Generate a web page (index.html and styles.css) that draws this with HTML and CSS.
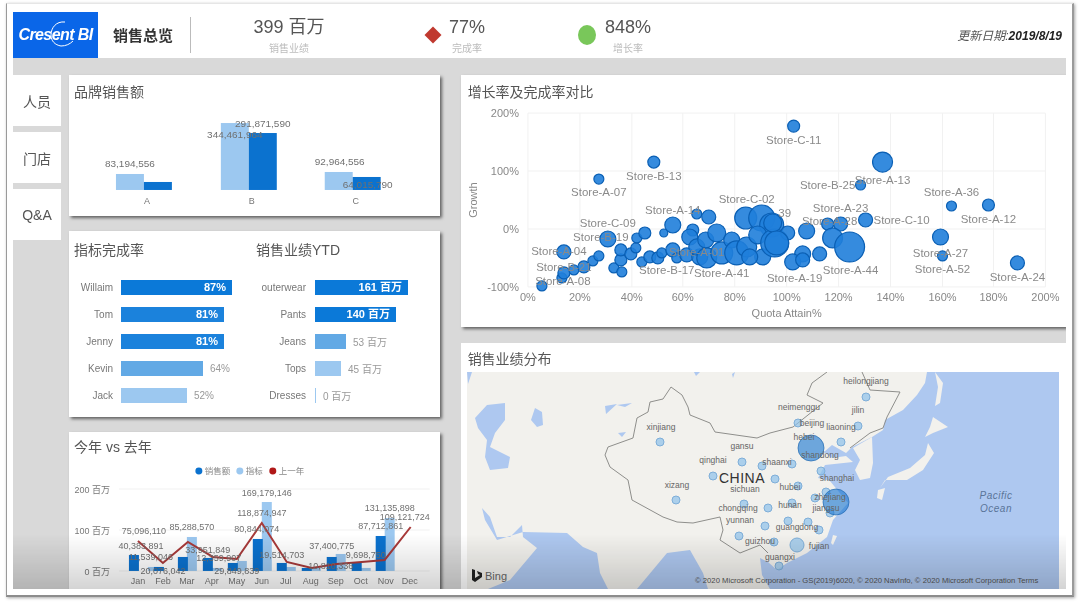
FILE: index.html
```html
<!DOCTYPE html>
<html lang="zh">
<head>
    <meta charset="UTF-8">
    <title>销售总览</title>
    <link rel="stylesheet" href="styles.css">
</head>
<body>
    <div class="frame">
        <header class="top">
            <div class="logo">
                <span class="logo-text">Cresent BI</span>
                <svg class="logo-arc" viewBox="0 0 30 30"><path d="M19 3C10 2 5 9 5 16c0 6 4 10 10 11 5 0 9-2 12-5" fill="none" stroke="#fff" stroke-width="1"/></svg>
            </div>
            <div class="page-title">销售总览</div>
            <div class="kpi kpi-sales">
                <div class="kpi-value">399 百万</div>
                <div class="kpi-label">销售业绩</div>
            </div>
            <div class="diamond"></div>
            <div class="kpi kpi-rate">
                <div class="kpi-value">77%</div>
                <div class="kpi-label">完成率</div>
            </div>
            <div class="dot"></div>
            <div class="kpi kpi-growth">
                <div class="kpi-value">848%</div>
                <div class="kpi-label">增长率</div>
            </div>
            <div class="update">更新日期:<b>2019/8/19</b></div>
        </header>

        <main class="main">
            <nav class="tabs">
                <div class="tab">人员</div>
                <div class="tab">门店</div>
                <div class="tab">Q&amp;A</div>
            </nav>

            <section class="col-left">
                <div class="card card-brand">
                    <h3>品牌销售额</h3>
                    <svg class="chart" viewBox="69 100 371 116">
                        <rect class="light" x="116" y="174" width="28" height="16"/>
                        <rect class="dark" x="144" y="182" width="28" height="8"/>
                        <rect class="light" x="221" y="123" width="28" height="67"/>
                        <rect class="dark" x="249" y="133" width="28" height="57"/>
                        <rect class="light" x="325" y="172" width="28" height="18"/>
                        <rect class="dark" x="353" y="177" width="28" height="13"/>
                        <text class="val" x="130" y="167" text-anchor="middle">83,194,556</text>
                        <text class="val" x="263" y="127" text-anchor="middle">291,871,590</text>
                        <text class="val" x="235" y="138" text-anchor="middle">344,461,964</text>
                        <text class="val" x="340" y="165" text-anchor="middle">92,964,556</text>
                        <text class="val" x="368" y="188" text-anchor="middle">64,015,790</text>
                        <text class="tick" x="147" y="204" text-anchor="middle">A</text>
                        <text class="tick" x="252" y="204" text-anchor="middle">B</text>
                        <text class="tick" x="356" y="204" text-anchor="middle">C</text>
                    </svg>
                </div>

                <div class="card card-bars">
                    <div class="bars bars-rate">
                        <h3>指标完成率</h3>
                        <div class="row"><span class="name">Willaim</span><div class="bar c1" style="width:111px">87%</div></div>
                        <div class="row"><span class="name">Tom</span><div class="bar c2" style="width:103px">81%</div></div>
                        <div class="row"><span class="name">Jenny</span><div class="bar c2" style="width:103px">81%</div></div>
                        <div class="row"><span class="name">Kevin</span><div class="bar c3" style="width:82px"></div><span class="out">64%</span></div>
                        <div class="row"><span class="name">Jack</span><div class="bar c4" style="width:66px"></div><span class="out">52%</span></div>
                    </div>
                    <div class="bars bars-ytd">
                        <h3>销售业绩YTD</h3>
                        <div class="row"><span class="name">outerwear</span><div class="bar c1" style="width:93px">161 百万</div></div>
                        <div class="row"><span class="name">Pants</span><div class="bar c1" style="width:81px">140 百万</div></div>
                        <div class="row"><span class="name">Jeans</span><div class="bar c3" style="width:31px"></div><span class="out">53 百万</span></div>
                        <div class="row"><span class="name">Tops</span><div class="bar c4" style="width:26px"></div><span class="out">45 百万</span></div>
                        <div class="row"><span class="name">Dresses</span><div class="bar c4" style="width:1px"></div><span class="out">0 百万</span></div>
                    </div>
                </div>

                <div class="card card-year">
                    <h3>今年 vs 去年</h3>
                    <svg class="chart" viewBox="69 457 371 132">
                        <circle class="dark" cx="199" cy="471" r="3.5"/><text class="legend" x="205" y="474">销售额</text>
                        <circle class="light" cx="240" cy="471" r="3.5"/><text class="legend" x="246" y="474">指标</text>
                        <circle fill="#b01818" cx="273" cy="471" r="3.5"/><text class="legend" x="279" y="474">上一年</text>

                        <line class="grid" x1="119" y1="489" x2="430" y2="489"/>
                        <line class="grid" x1="119" y1="530" x2="430" y2="530"/>
                        <line class="grid" x1="119" y1="571" x2="430" y2="571"/>
                        <text class="tick" x="110" y="493" text-anchor="end">200 百万</text>
                        <text class="tick" x="110" y="534" text-anchor="end">100 百万</text>
                        <text class="tick" x="110" y="575" text-anchor="end">0 百万</text>

                        <g class="light">
                            <rect x="148" y="567" width="10" height="4"/><rect x="187" y="537" width="10" height="34"/>
                            <rect x="212" y="568" width="10" height="3"/><rect x="237" y="561" width="10" height="10"/>
                            <rect x="262" y="502" width="10" height="69"/><rect x="286" y="567" width="10" height="4"/>
                            <rect x="311" y="567" width="10" height="4"/><rect x="336" y="554" width="10" height="17"/>
                            <rect x="361" y="568" width="10" height="3"/><rect x="385" y="518" width="10" height="53"/>
                        </g>
                        <g class="dark">
                            <rect x="129" y="555" width="10" height="16"/><rect x="154" y="567" width="10" height="4"/>
                            <rect x="178" y="557" width="10" height="14"/><rect x="203" y="558" width="10" height="13"/>
                            <rect x="228" y="563" width="10" height="8"/><rect x="253" y="539" width="10" height="32"/>
                            <rect x="277" y="563" width="10" height="8"/><rect x="302" y="568" width="10" height="3"/>
                            <rect x="327" y="557" width="10" height="14"/><rect x="352" y="563" width="10" height="8"/>
                            <rect x="376" y="536" width="10" height="35"/>
                        </g>
                        <polyline class="trend" points="138,541 163,563 188,542 213,557 237,559 262,523 287,562 312,568 337,564 362,562 385,560 411,527"/>

                        <g class="val val-small" text-anchor="middle">
                            <text x="144" y="534">75,096,110</text>
                            <text x="141" y="549">40,383,891</text>
                            <text x="151" y="560">11,539,046</text>
                            <text x="163" y="574">20,076,042</text>
                            <text x="192" y="530">85,288,570</text>
                            <text x="208" y="553">33,951,849</text>
                            <text x="219" y="561">12,359,907</text>
                            <text x="237" y="574">29,849,839</text>
                            <text x="267" y="496">169,179,146</text>
                            <text x="262" y="516">118,874,947</text>
                            <text x="257" y="532">80,844,074</text>
                            <text x="282" y="558">19,514,703</text>
                            <text x="332" y="549">37,400,775</text>
                            <text x="331" y="569">10,810,336</text>
                            <text x="366" y="558">9,698,750</text>
                            <text x="390" y="511">131,135,898</text>
                            <text x="405" y="520">109,121,724</text>
                            <text x="381" y="529">87,712,861</text>
                        </g>

                        <g class="tick" text-anchor="middle">
                            <text x="138" y="584">Jan</text><text x="163" y="584">Feb</text><text x="187" y="584">Mar</text>
                            <text x="212" y="584">Apr</text><text x="237" y="584">May</text><text x="262" y="584">Jun</text>
                            <text x="286" y="584">Jul</text><text x="311" y="584">Aug</text><text x="336" y="584">Sep</text>
                            <text x="361" y="584">Oct</text><text x="386" y="584">Nov</text><text x="410" y="584">Dec</text>
                        </g>
                    </svg>
                </div>
            </section>

            <section class="col-right">
                <div class="card card-scatter">
                    <h3>增长率及完成率对比</h3>
                    <svg class="chart" viewBox="461 100 606 227">
                        <g class="grid">
                            <line x1="528" y1="113" x2="1046" y2="113"/><line x1="528" y1="171" x2="1046" y2="171"/>
                            <line x1="528" y1="229" x2="1046" y2="229"/><line x1="528" y1="287" x2="1046" y2="287"/>
                            <line x1="528" y1="113" x2="528" y2="287"/><line x1="580" y1="113" x2="580" y2="287"/>
                            <line x1="632" y1="113" x2="632" y2="287"/><line x1="683" y1="113" x2="683" y2="287"/>
                            <line x1="735" y1="113" x2="735" y2="287"/><line x1="787" y1="113" x2="787" y2="287"/>
                            <line x1="839" y1="113" x2="839" y2="287"/><line x1="891" y1="113" x2="891" y2="287"/>
                            <line x1="943" y1="113" x2="943" y2="287"/><line x1="994" y1="113" x2="994" y2="287"/>
                            <line x1="1046" y1="113" x2="1046" y2="287"/>
                        </g>
                        <g class="axis" text-anchor="end">
                            <text x="519" y="117">200%</text><text x="519" y="175">100%</text>
                            <text x="519" y="233">0%</text><text x="519" y="291">-100%</text>
                        </g>
                        <g class="axis" text-anchor="middle">
                            <text x="528" y="301">0%</text><text x="580" y="301">20%</text><text x="632" y="301">40%</text>
                            <text x="683" y="301">60%</text><text x="735" y="301">80%</text><text x="787" y="301">100%</text>
                            <text x="839" y="301">120%</text><text x="891" y="301">140%</text><text x="943" y="301">160%</text>
                            <text x="994" y="301">180%</text><text x="1046" y="301">200%</text>
                            <text x="787" y="317">Quota Attain%</text>
                            <text transform="translate(477 200) rotate(-90)">Growth</text>
                        </g>
                        <g class="bubbles">
                            <circle cx="654" cy="162" r="6"/><circle cx="599" cy="179" r="5"/><circle cx="564" cy="252" r="7"/>
                            <circle cx="542" cy="286" r="5"/><circle cx="562" cy="278" r="5"/><circle cx="564" cy="273" r="6"/>
                            <circle cx="574" cy="270" r="5"/><circle cx="584" cy="267" r="6"/><circle cx="593" cy="261" r="5"/>
                            <circle cx="599" cy="256" r="5"/><circle cx="608" cy="239" r="8"/><circle cx="614" cy="268" r="5"/>
                            <circle cx="622" cy="272" r="5"/><circle cx="621" cy="260" r="6"/><circle cx="621" cy="250" r="6"/>
                            <circle cx="631" cy="254" r="6"/><circle cx="636" cy="248" r="5"/><circle cx="637" cy="238" r="5"/>
                            <circle cx="645" cy="233" r="6"/><circle cx="642" cy="262" r="5"/><circle cx="650" cy="257" r="6"/>
                            <circle cx="658" cy="258" r="6"/><circle cx="664" cy="233" r="4"/><circle cx="662" cy="253" r="5"/>
                            <circle cx="673" cy="225" r="8"/><circle cx="673" cy="250" r="7"/><circle cx="677" cy="258" r="5"/>
                            <circle cx="687" cy="255" r="7"/><circle cx="697" cy="214" r="5"/><circle cx="709" cy="217" r="7"/>
                            <circle cx="693" cy="230" r="6"/><circle cx="690" cy="237" r="8"/><circle cx="700" cy="257" r="8"/>
                            <circle cx="697" cy="247" r="8"/><circle cx="707" cy="258" r="10"/><circle cx="706" cy="240" r="8"/>
                            <circle cx="717" cy="233" r="9"/><circle cx="722" cy="253" r="11"/><circle cx="732" cy="240" r="8"/>
                            <circle cx="737" cy="253" r="12"/><circle cx="747" cy="247" r="10"/><circle cx="746" cy="218" r="11"/>
                            <circle cx="762" cy="218" r="13"/><circle cx="772" cy="225" r="12"/><circle cx="758" cy="235" r="9"/>
                            <circle cx="763" cy="257" r="8"/><circle cx="750" cy="257" r="8"/><circle cx="775" cy="243" r="14"/>
                            <circle cx="794" cy="126" r="6"/><circle cx="883" cy="162" r="10"/><circle cx="861" cy="185" r="5"/>
                            <circle cx="866" cy="220" r="7"/><circle cx="841" cy="224" r="7"/><circle cx="828" cy="224" r="6"/>
                            <circle cx="833" cy="238" r="10"/><circle cx="850" cy="247" r="15"/><circle cx="820" cy="254" r="7"/>
                            <circle cx="803" cy="254" r="8"/><circle cx="793" cy="262" r="8"/><circle cx="803" cy="260" r="7"/>
                            <circle cx="807" cy="231" r="8"/><circle cx="788" cy="233" r="7"/><circle cx="773" cy="223" r="9"/>
                            <circle cx="777" cy="243" r="12"/><circle cx="952" cy="206" r="5"/><circle cx="989" cy="205" r="6"/>
                            <circle cx="941" cy="237" r="8"/><circle cx="943" cy="256" r="5"/><circle cx="1018" cy="263" r="7"/>
                        </g>
                        <g class="store" text-anchor="middle">
                            <text x="794" y="144">Store-C-11</text><text x="654" y="180">Store-B-13</text>
                            <text x="599" y="196">Store-A-07</text><text x="828" y="189">Store-B-25</text>
                            <text x="883" y="184">Store-A-13</text><text x="952" y="196">Store-A-36</text>
                            <text x="989" y="223">Store-A-12</text><text x="902" y="224">Store-C-10</text>
                            <text x="841" y="212">Store-A-23</text><text x="941" y="257">Store-A-27</text>
                            <text x="943" y="273">Store-A-52</text><text x="1018" y="281">Store-A-24</text>
                            <text x="851" y="274">Store-A-44</text><text x="795" y="282">Store-A-19</text>
                            <text x="747" y="203">Store-C-02</text><text x="673" y="214">Store-A-14</text>
                            <text x="608" y="227">Store-C-09</text><text x="601" y="241">Store-B-19</text>
                            <text x="559" y="255">Store-A-04</text><text x="667" y="274">Store-B-17</text>
                            <text x="722" y="277">Store-A-41</text><text x="563" y="285">Store-A-08</text>
                            <text x="564" y="271">Store-B-21</text><text x="697" y="256">Store-A-01</text>
                            <text x="785" y="217">39</text><text x="830" y="225">Store-A-28</text>
                        </g>
                    </svg>
                </div>

                <div class="card card-map">
                    <h3>销售业绩分布</h3>
                    <svg class="map" viewBox="467 372 592 217">
                        <rect class="land" x="467" y="372" width="592" height="217"/>
                        <path class="sea" d="M927 372L925 383 917 395 903 410 885 420 883 430 872 437 852 447 846 453 832 445 824 452 832 458 846 456 853 462 825 465 818 478 830 481 848 503 833 520 827 537 807 553 787 563 777 570 768 562 760 558 762 575 770 589H1059V372Z"/>
                        <path class="sea" d="M475 418L487 405 505 403 505 420 495 433 490 447 510 457 508 468 490 470 485 457 487 440 478 428Z"/>
                        <path class="sea" d="M531 420L535 408 542 412 543 425 537 427Z"/>
                        <path class="sea" d="M488 589L510 580 537 548 523 537 522 525 510 537 497 537 490 517 482 508 485 520 497 540 523 532 567 533 583 547 597 553 600 573 608 589Z"/>
                        <path class="sea" d="M637 589L667 553 690 550 703 573 708 589Z"/>
                        <path class="sea" d="M605 406L617 404 606 414ZM617 405L632 403 625 407ZM618 433L626 432 622 437ZM467 372L472 372 468 384ZM694 372L700 372 696 376ZM732 374L735 372 733 378Z"/>
                        <path class="land" d="M853 448L872 437 873 463 870 478 860 480 855 470 860 460ZM933 417L948 427 933 433 925 437 930 427ZM928 443L934 453 923 470 907 480 885 480 880 488 888 477 910 468 925 455ZM935 372L943 383 940 403 935 406 938 387ZM878 490L885 488 882 500 877 498ZM833 535L837 536 833 545 831 543Z"/>
                        <g class="border">
                            <polyline points="827,372 812,383 807,395 823,403 793,427 770,433 757,438 715,432 710,423 690,415 688,407 682,395 671,387 663,399 650,402 648,412 637,418 633,438 608,447 605,455 610,467 628,480 632,500 663,517 677,522 693,523 720,517 723,530 720,540 740,553 760,545 768,553"/>
                            <polyline points="862,372 870,390 900,392 887,417 883,428 870,433 850,448"/>
                        </g>
                        <g class="pin">
                            <circle cx="660" cy="442" r="4"/><circle cx="742" cy="462" r="4"/><circle cx="762" cy="466" r="4"/>
                            <circle cx="713" cy="476" r="4"/><circle cx="676" cy="500" r="4"/><circle cx="744" cy="504" r="4"/>
                            <circle cx="768" cy="508" r="4"/><circle cx="765" cy="526" r="4"/><circle cx="739" cy="536" r="4"/>
                            <circle cx="866" cy="397" r="4"/><circle cx="798" cy="423" r="4"/><circle cx="858" cy="426" r="4"/>
                            <circle cx="841" cy="442" r="4"/><circle cx="792" cy="464" r="4"/><circle cx="821" cy="471" r="4"/>
                            <circle cx="775" cy="479" r="4"/><circle cx="798" cy="486" r="4"/><circle cx="826" cy="492" r="4"/>
                            <circle cx="815" cy="498" r="4"/><circle cx="792" cy="503" r="4"/><circle cx="830" cy="513" r="4"/>
                            <circle cx="788" cy="521" r="4"/><circle cx="808" cy="522" r="4"/><circle cx="819" cy="530" r="4"/>
                            <circle cx="774" cy="542" r="4"/><circle cx="779" cy="566" r="4"/>
                            <circle cx="797" cy="545" r="7"/>
                        </g>
                        <g class="pin-big">
                            <circle cx="811" cy="448" r="13"/><circle cx="836" cy="502" r="13"/>
                        </g>
                        <g class="place" text-anchor="middle">
                            <text x="866" y="384">heilongjiang</text><text x="858" y="413">jilin</text>
                            <text x="799" y="410">neimenggu</text><text x="812" y="426">beijing</text>
                            <text x="841" y="430">liaoning</text><text x="804" y="440">hebei</text>
                            <text x="820" y="458">shandong</text><text x="837" y="481">shanghai</text>
                            <text x="777" y="465">shaanxi</text><text x="790" y="490">hubei</text>
                            <text x="830" y="500">zhejiang</text><text x="790" y="508">hunan</text>
                            <text x="826" y="511">jiangsu</text><text x="797" y="530">guangdong</text>
                            <text x="819" y="549">fujian</text><text x="780" y="560">guangxi</text>
                            <text x="661" y="430">xinjiang</text><text x="742" y="449">gansu</text>
                            <text x="713" y="463">qinghai</text><text x="745" y="492">sichuan</text>
                            <text x="677" y="488">xizang</text><text x="738" y="511">chongqing</text>
                            <text x="740" y="523">yunnan</text><text x="760" y="544">guizhou</text>
                        </g>
                        <text class="country" x="742" y="483" text-anchor="middle">CHINA</text>
                        <text class="ocean" x="996" y="499" text-anchor="middle">Pacific</text>
                        <text class="ocean" x="996" y="512" text-anchor="middle">Ocean</text>
                        <path class="bing" d="M472 569l3 1v8l5-3-2-1-1-3 5 2v4l-7 5-3-2z"/>
                        <text class="bing-text" x="485" y="580">Bing</text>
                        <text class="copy" x="695" y="583">© 2020 Microsoft Corporation - GS(2019)6020, © 2020 NavInfo, © 2020 Microsoft Corporation  Terms</text>
                    </svg>
                </div>
            </section>
        </main>
    </div>
</body>
</html>
```

FILE: styles.css
```css
* {
    box-sizing: border-box;
}

html, body {
    height: 100%;
}

body {
    margin: 0;
    background-color: #fff;
    overflow: hidden;
    font-family: "Liberation Sans", "Noto Sans CJK SC", sans-serif;
}

.frame {
    width: 1068px;
    height: 594px;
    margin: 3px 0 0 6px;
    padding: 7px 6px 7px 6px;
    background: #fff;
    border-top: 1px solid #e6e6e6;
    border-left: 1px solid #9a9a9a;
    border-right: 2px solid #9a9a9a;
    border-bottom: 2px solid #8c8c8c;
    box-shadow: 1px 1px 3px rgba(0, 0, 0, 0.35);
    filter: blur(0.6px);
}

/* header */
.top {
    display: flex;
    align-items: center;
    height: 47px;
}

.logo {
    position: relative;
    width: 85px;
    height: 46px;
    background-color: #0a66e8;
    display: flex;
    align-items: center;
    justify-content: center;
    flex-shrink: 0;
}

.logo-text {
    color: #fff;
    font-size: 16px;
    font-style: italic;
    font-weight: bold;
    letter-spacing: -0.6px;
}

.logo-arc {
    position: absolute;
    left: 33px;
    top: 7px;
    width: 30px;
    height: 30px;
}

.page-title {
    width: 78px;
    height: 36px;
    margin-left: 15px;
    line-height: 36px;
    font-size: 15px;
    font-weight: bold;
    color: #333;
    border-right: 1px solid #bbb;
    font-family: "Noto Sans CJK SC", sans-serif;
}

.kpi {
    text-align: center;
    font-family: "Liberation Sans", "Noto Sans CJK SC", sans-serif;
}

.kpi-value {
    font-size: 18px;
    line-height: 22px;
    color: #555;
    margin-top: 3px;
}

.kpi-label {
    font-size: 10px;
    line-height: 14px;
    margin-top: 4px;
    color: #bcbcbc;
}

.kpi-sales {
    width: 100px;
    margin-left: 48px;
}

.diamond {
    width: 12px;
    height: 12px;
    margin-left: 88px;
    background-color: #c0392f;
    transform: rotate(45deg);
    flex-shrink: 0;
}

.kpi-rate {
    width: 38px;
    margin-left: 9px;
}

.dot {
    width: 18px;
    height: 20px;
    margin-left: 92px;
    border-radius: 50%;
    background-color: #79c75a;
    flex-shrink: 0;
}

.kpi-growth {
    width: 46px;
    margin-left: 9px;
}

.update {
    margin-left: auto;
    margin-right: 4px;
    font-size: 12px;
    font-style: italic;
    color: #555;
}

.update b {
    color: #222;
}

/* body of the report */
.main {
    position: relative;
    display: flex;
    height: 531px;
    padding-top: 17px;
    background-color: #d9d9d9;
    overflow: hidden;
}

.main::after {
    content: "";
    position: absolute;
    left: 0;
    right: 0;
    bottom: 0;
    height: 55px;
    background: linear-gradient(rgba(0, 0, 0, 0), rgba(0, 0, 0, 0.17));
}

.tabs {
    display: flex;
    flex-direction: column;
    gap: 6px;
    width: 48px;
    flex-shrink: 0;
}

.tab {
    height: 51px;
    background-color: #fff;
    display: flex;
    align-items: center;
    justify-content: center;
    font-size: 14px;
    color: #555;
}

.col-left {
    display: flex;
    flex-direction: column;
    gap: 15px;
    width: 371px;
    margin-left: 8px;
}

.col-right {
    display: flex;
    flex-direction: column;
    gap: 16px;
    width: 606px;
    margin-left: 21px;
}

.card {
    background-color: #fff;
    box-shadow: 2px 2px 3px rgba(0, 0, 0, 0.55);
}

.card h3 {
    margin: 0;
    height: 25px;
    padding: 9px 0 0 5px;
    font-size: 14px;
    line-height: 16px;
    font-weight: normal;
    color: #555;
}

.card-brand {
    height: 141px;
}

.card-bars {
    display: flex;
    height: 186px;
}

.card-year {
    height: 157px;
}

.card-year h3 {
    padding-top: 7px;
}

.card-scatter {
    height: 252px;
}

.card-scatter h3 {
    padding-left: 7px;
}

.card-map {
    height: 246px;
    box-shadow: none;
}

.card-map h3 {
    height: 29px;
    padding-left: 7px;
    padding-top: 8px;
}

.chart, .map {
    display: block;
}

.chart {
    width: 100%;
}

.card-brand .chart {
    height: 116px;
}

.card-year .chart {
    height: 132px;
}

.card-scatter .chart {
    height: 227px;
}

.map {
    width: 592px;
    height: 217px;
    margin-left: 6px;
}

/* horizontal bars */
.bars {
    font-size: 10px;
    color: #777;
}

.bars h3 {
    height: 49px;
    padding-top: 11px;
}

.bars-rate {
    width: 182px;
}

.row {
    display: flex;
    align-items: center;
    height: 15px;
    margin-bottom: 12px;
}

.name {
    text-align: right;
    flex-shrink: 0;
}

.bars-rate .name {
    width: 44px;
    margin-right: 8px;
}

.bars-ytd .name {
    width: 55px;
    margin-right: 9px;
}

.bar {
    height: 15px;
    line-height: 15px;
    text-align: right;
    font-weight: bold;
    font-size: 11px;
    color: #fff;
    white-space: nowrap;
}

.bar:not(:empty) {
    padding-right: 6px;
}

.c1 { background-color: #0b79d8; }
.c2 { background-color: #1b82dc; }
.c3 { background-color: #62a9e5; }
.c4 { background-color: #9cc8f0; }

.out {
    margin-left: 7px;
    color: #999;
}

/* svg bits */
.light, .light rect { fill: #9cc8f0; }
.dark, .dark rect { fill: #0b72cf; }

.val {
    font-size: 10px;
    fill: #707070;
}

.val-small {
    font-size: 9px;
}

.tick {
    font-size: 9px;
    fill: #777;
}

.axis {
    font-size: 11px;
    fill: #888;
}

.legend {
    font-size: 8.5px;
    fill: #888;
}

.grid, .grid line {
    stroke: #f1f1f1;
    stroke-width: 1;
}

.trend {
    fill: none;
    stroke: #a83a3a;
    stroke-width: 2;
}

.bubbles circle {
    fill: #1f7eda;
    fill-opacity: 0.9;
    stroke: #0a5fb4;
    stroke-width: 1.2;
}

.store {
    font-size: 11.5px;
    fill: #8a8a8a;
}

.land { fill: #f2f1ed; }
.sea { fill: #aec8f0; }

.border polyline {
    fill: none;
    stroke: #8f8f8c;
    stroke-width: 1;
}

.pin circle {
    fill: #8dc0ea;
    fill-opacity: 0.7;
    stroke: #7eaed8;
    stroke-width: 1;
}

.pin-big circle {
    fill: #1c78d2;
    fill-opacity: 0.62;
    stroke: #1f68b0;
    stroke-width: 0.7;
}

.place {
    font-size: 8.5px;
    fill: #666;
}

.country {
    font-size: 14px;
    letter-spacing: 0.5px;
    fill: #333;
}

.ocean {
    font-size: 10px;
    font-style: italic;
    letter-spacing: 0.5px;
    fill: #5a7599;
}

.bing { fill: #222; }

.bing-text {
    font-size: 11px;
    fill: #666;
}

.copy {
    font-size: 7.7px;
    fill: #555;
}
```
